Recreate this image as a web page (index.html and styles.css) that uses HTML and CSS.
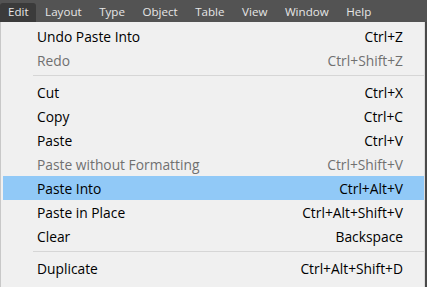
FILE: index.html
```html
<!DOCTYPE html>
<html>
<head>
<meta charset="utf-8">
<link rel="stylesheet" href="styles.css">
</head>
<body>
<div class="menubar">
  <span class="top active">Edit</span>
  <span class="top">Layout</span>
  <span class="top">Type</span>
  <span class="top">Object</span>
  <span class="top">Table</span>
  <span class="top">View</span>
  <span class="top">Window</span>
  <span class="top">Help</span>
</div>
<div class="stage">
  <div class="menu">
    <div class="item"><span>Undo Paste Into</span><span>Ctrl+Z</span></div>
    <div class="item disabled"><span>Redo</span><span>Ctrl+Shift+Z</span></div>
    <div class="sep"></div>
    <div class="item"><span>Cut</span><span>Ctrl+X</span></div>
    <div class="item"><span>Copy</span><span>Ctrl+C</span></div>
    <div class="item"><span>Paste</span><span>Ctrl+V</span></div>
    <div class="item disabled"><span>Paste without Formatting</span><span>Ctrl+Shift+V</span></div>
    <div class="item hover"><span>Paste Into</span><span>Ctrl+Alt+V</span></div>
    <div class="item"><span>Paste in Place</span><span>Ctrl+Alt+Shift+V</span></div>
    <div class="item"><span>Clear</span><span>Backspace</span></div>
    <div class="sep"></div>
    <div class="item"><span>Duplicate</span><span>Ctrl+Alt+Shift+D</span></div>
    <div class="item"><span>Step and Repeat...</span><span>Ctrl+Alt+U</span></div>
  </div>
  <div class="edge"></div>
</div>
</body>
</html>
```
FILE: styles.css
```css
html, body {
  margin: 0;
  padding: 0;
  width: 427px;
  height: 287px;
  overflow: hidden;
  background: #f0f0f0;
}
.menubar {
  height: 22px;
  background: #535353;
  display: flex;
  align-items: flex-end;
  font-family: "Open Sans", sans-serif;
  font-size: 11.6px;
  color: #e6e6e6;
}
.top {
  height: 19px;
  line-height: 18px;
  padding: 0 8px;
  margin-right: 1.5px;
}
.active {
  background: #3b3b3b;
  border-radius: 3px 3px 0 0;
  padding-right: 7px;
}
.stage {
  display: flex;
  height: 265px;
}
.menu {
  width: 421px;
  border-left: 1px solid #c8c8c8;
  padding: 2px 0 0 2px;
  background: #f0f0f0;
  font-family: "Open Sans", sans-serif;
  font-size: 13.8px;
  color: #000;
}
.edge {
  width: 1px;
  background: #dcdcdc;
  border-right: 2px solid #4a4a4a;
}
.item {
  height: 24px;
  display: flex;
  justify-content: space-between;
  align-items: center;
  padding: 0 21px 0 34px;
}
.item.disabled {
  color: #707070;
}
.item.hover {
  background: #91c9f7;
}
.sep {
  height: 1px;
  background: #d6d6d6;
  margin: 3px 0 4px 30px;
}
```
